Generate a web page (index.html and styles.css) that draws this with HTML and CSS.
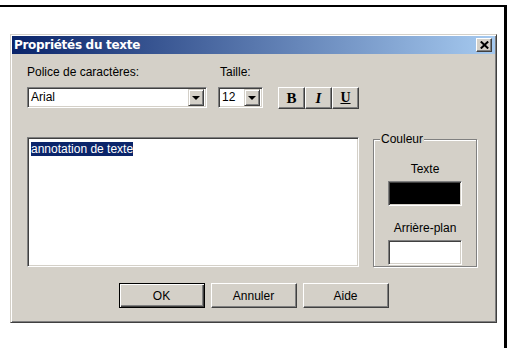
FILE: index.html
```html
<!DOCTYPE html>
<html lang="fr">
<head>
    <meta charset="UTF-8">
    <title>Propriétés du texte</title>
    <link rel="stylesheet" href="styles.css">
</head>
<body>
    <div class="frame">
        <div class="dialog">
            <div class="titlebar">
                <span class="title">Propriétés du texte</span>
                <span class="close-btn">
                    <svg width="9" height="8" viewBox="0 0 9 8">
                        <path d="M0.8 0.5 L8.2 7.5 M8.2 0.5 L0.8 7.5" stroke="#000" stroke-width="2"/>
                    </svg>
                </span>
            </div>

            <div class="dialog-body">
                <div class="top-row">
                    <div class="field">
                        <label class="label">Police de caractères:</label>
                        <div class="combo combo-font">
                            <span class="combo-value">Arial</span>
                            <span class="combo-arrow"><span class="arrow"></span></span>
                        </div>
                    </div>
                    <div class="field">
                        <label class="label label-size">Taille:</label>
                        <div class="combo combo-size">
                            <span class="combo-value">12</span>
                            <span class="combo-arrow"><span class="arrow"></span></span>
                        </div>
                    </div>
                    <div class="style-buttons">
                        <span class="style-btn btn-bold">B</span>
                        <span class="style-btn btn-italic">I</span>
                        <span class="style-btn btn-under">U</span>
                    </div>
                </div>

                <div class="main-row">
                    <div class="text-area">
                        <span class="selected">annotation de texte</span>
                    </div>
                    <div class="group-box">
                        <span class="legend">Couleur</span>
                        <div class="swatch-label">Texte</div>
                        <div class="swatch swatch-black"></div>
                        <div class="swatch-label">Arrière-plan</div>
                        <div class="swatch swatch-white"></div>
                    </div>
                </div>

                <div class="button-row">
                    <span class="push-btn default-btn"><span>OK</span></span>
                    <span class="push-btn"><span>Annuler</span></span>
                    <span class="push-btn"><span>Aide</span></span>
                </div>
            </div>
        </div>
    </div>
</body>
</html>
```

FILE: styles.css
```css
body {
    margin: 0;
    background-color: #fff;
    font-family: 'Liberation Sans', Arial, sans-serif;
    font-size: 12px;
    color: #000;
}
.frame {
    margin-top: 5px;
    width: 507px;
    height: 343px;
    border-top: 2px solid #000;
    border-right: 3px solid #000;
    box-sizing: border-box;
    padding-top: 27px;
    padding-left: 10px;
}
.dialog {
    width: 487px;
    height: 289px;
    box-sizing: border-box;
    background-color: #d4d0c8;
    border: 1px solid;
    border-color: #d4d0c8 #404040 #404040 #d4d0c8;
    box-shadow: inset 1px 1px #fff, inset -1px -1px #808080;
    padding: 1px;
    display: flex;
    flex-direction: column;
}
.titlebar {
    height: 18px;
    background: linear-gradient(to right, #0a246a, #a6caf0);
    display: flex;
    align-items: center;
    justify-content: space-between;
    padding: 0 3px 0 2px;
}
.title {
    color: #fff;
    font-family: 'DejaVu Sans', Verdana, sans-serif;
    font-weight: bold;
    font-size: 12px;
    letter-spacing: -0.3px;
}
.close-btn {
    width: 16px;
    height: 14px;
    box-sizing: border-box;
    background-color: #d4d0c8;
    border: 1px solid;
    border-color: #fff #404040 #404040 #fff;
    box-shadow: inset -1px -1px #808080;
    display: flex;
    align-items: center;
    justify-content: center;
}
.dialog-body {
    padding: 11px 0 0 15px;
}
.top-row {
    display: flex;
    align-items: flex-end;
}
.field {
    display: flex;
    flex-direction: column;
    margin-right: 11px;
}
.label {
    line-height: 14px;
    margin-bottom: 8px;
}
.label-size {
    margin-left: 2px;
}
.combo {
    height: 21px;
    box-sizing: border-box;
    background-color: #fff;
    border: 1px solid;
    border-color: #808080 #fff #fff #808080;
    box-shadow: inset 1px 1px #404040, inset -1px -1px #d4d0c8;
    display: flex;
    align-items: center;
    justify-content: space-between;
    padding: 2px;
}
.combo-font {
    width: 180px;
}
.combo-size {
    width: 45px;
}
.combo-value {
    padding-left: 1px;
    line-height: 15px;
}
.combo-arrow {
    width: 16px;
    height: 17px;
    box-sizing: border-box;
    background-color: #d4d0c8;
    border: 1px solid;
    border-color: #d4d0c8 #404040 #404040 #d4d0c8;
    box-shadow: inset 1px 1px #fff, inset -1px -1px #808080;
    display: flex;
    align-items: center;
    justify-content: center;
}
.arrow {
    width: 0;
    height: 0;
    border-left: 4px solid transparent;
    border-right: 4px solid transparent;
    border-top: 4px solid #000;
    margin-top: 1px;
}
.style-buttons {
    display: flex;
    margin-left: 4px;
    margin-bottom: -1px;
}
.style-btn {
    width: 27px;
    height: 22px;
    box-sizing: border-box;
    background-color: #d4d0c8;
    border: 1px solid;
    border-color: #fff #404040 #404040 #fff;
    box-shadow: inset -1px -1px #808080;
    display: flex;
    align-items: center;
    justify-content: center;
    font-weight: bold;
    font-size: 15px;
}
.btn-bold {
    font-family: 'Liberation Serif', 'Times New Roman', serif;
}
.btn-italic {
    font-family: 'Liberation Serif', 'Times New Roman', serif;
    font-style: italic;
}
.btn-under {
    font-family: 'Liberation Serif', 'Times New Roman', serif;
    text-decoration: underline;
    font-size: 14px;
}
.main-row {
    display: flex;
    margin-top: 29px;
    height: 130px;
}
.text-area {
    width: 332px;
    height: 130px;
    box-sizing: border-box;
    background-color: #fff;
    border: 1px solid;
    border-color: #808080 #fff #fff #808080;
    box-shadow: inset 1px 1px #404040, inset -1px -1px #d4d0c8;
    padding: 4px 3px;
    line-height: 14px;
}
.selected {
    background-color: #0a246a;
    color: #fff;
}
.group-box {
    position: relative;
    width: 104px;
    height: 128px;
    margin-top: 2px;
    margin-left: 14px;
    box-sizing: border-box;
    border: 1px solid #808080;
    box-shadow: inset 1px 1px #fff, 1px 1px #fff;
    display: flex;
    flex-direction: column;
    align-items: center;
    padding-top: 22px;
}
.legend {
    position: absolute;
    top: -8px;
    left: 6px;
    padding: 0 1px;
    background-color: #d4d0c8;
    line-height: 14px;
}
.swatch-label {
    line-height: 14px;
    margin-bottom: 5px;
}
.swatch {
    width: 74px;
    height: 25px;
    box-sizing: border-box;
    border: 1px solid;
    border-color: #808080 #fff #fff #808080;
    box-shadow: inset 1px 1px #404040, inset -1px -1px #d4d0c8;
}
.swatch-black {
    background-color: #000;
    margin-bottom: 15px;
}
.swatch-white {
    background-color: #fff;
}
.button-row {
    display: flex;
    justify-content: center;
    gap: 6px;
    margin-top: 16px;
    margin-left: -15px;
}
.push-btn {
    width: 86px;
    height: 25px;
    box-sizing: border-box;
    background-color: #d4d0c8;
    border: 1px solid;
    border-color: #fff #404040 #404040 #fff;
    box-shadow: inset -1px -1px #808080;
    display: flex;
    align-items: center;
    justify-content: center;
}
.default-btn {
    border: 1px solid #000;
    box-shadow: inset 1px 1px #fff, inset -1px -1px #404040, inset -2px -2px #808080;
}
```
